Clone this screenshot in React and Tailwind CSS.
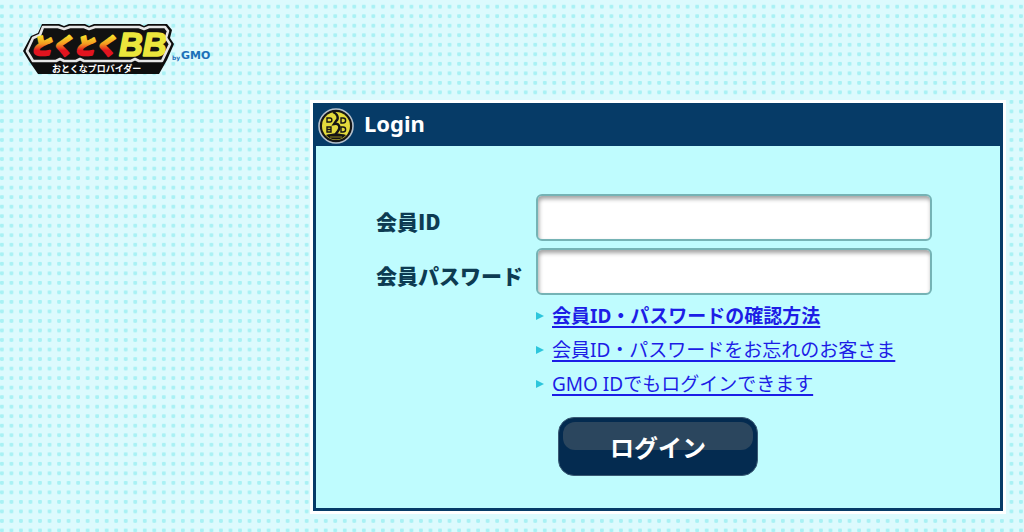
import React, { useState } from "react";

const links = [
  { text: "会員ID・パスワードの確認方法", strong: true },
  { text: "会員ID・パスワードをお忘れのお客さま", strong: false },
  { text: "GMO IDでもログインできます", strong: false },
];

const DotBackground = () => (
  <svg className="absolute inset-0 -z-10 h-full w-full" aria-hidden="true">
    <defs>
      <pattern id="dots" width="9.524" height="9.524" patternUnits="userSpaceOnUse">
        <rect x="0" y="4.7" width="3.8" height="3.8" rx="1" fill="#a9f1f4" />
      </pattern>
    </defs>
    <rect width="100%" height="100%" fill="url(#dots)" />
  </svg>
);

const Logo = () => (
  <svg width="192" height="54" viewBox="0 0 192 54" role="img" aria-label="とくとくBB by GMO">
    <defs>
      <linearGradient id="fire" gradientUnits="userSpaceOnUse" x1="0" y1="8" x2="0" y2="34">
        <stop offset="0.15" stopColor="#f8e62a" />
        <stop offset="0.5" stopColor="#f39a20" />
        <stop offset="0.75" stopColor="#e2141f" />
      </linearGradient>
    </defs>
    {/* Black plate */}
    <path
      d="M20 1H37L42 3L47 1H63L67 3L72 1H118L122 3L126 1H145L150 7L148 15L152 21L145 37L137 51H16L7 38L1 28L9 13L16 10Z"
      fill="#0d0d0d"
    />
    {/* Silver rim */}
    <path
      d="M21 4H36L42 6L48 4H62L67 6L73 4H117L122 6L127 4H143L146 8L144 15L148 21L140 38H117L113 36L109 38H62L58 36L54 38H42L38 36L34 38H11L5 28L11 15L18 12Z"
      fill="#111"
      stroke="#e6e6e6"
      strokeWidth="2.6"
      strokeLinejoin="round"
    />
    <g fontStyle="italic" strokeLinejoin="round">
      <text
        x="8"
        y="31"
        fontFamily="'Noto Sans CJK JP', sans-serif"
        fontSize="22"
        fontWeight="900"
        fill="url(#fire)"
        stroke="url(#fire)"
        strokeWidth="2.2"
      >
        とくとく
      </text>
      <text
        x="97"
        y="33"
        fontFamily="'Liberation Sans', Arial, sans-serif"
        fontSize="33"
        fontWeight="700"
        fill="#ebe63c"
        stroke="#ebe63c"
        strokeWidth="1.6"
      >
        BB
      </text>
    </g>
    <text
      x="30"
      y="49"
      fontFamily="'Noto Sans CJK JP', sans-serif"
      fontSize="9"
      fontWeight="700"
      fill="#fff"
    >
      おとくなプロバイダー
    </text>
    <g fontFamily="'DejaVu Sans', sans-serif" fontWeight="700" fill="#1c70b8">
      <text x="150" y="37" fontSize="6">by</text>
      <text x="159" y="36" fontSize="11">GMO</text>
    </g>
  </svg>
);

const Badge = () => (
  <svg width="36" height="36" viewBox="0 0 36 36" aria-hidden="true">
    <circle cx="18" cy="18" r="17" fill="#151515" stroke="#b4c0cc" strokeWidth="1.6" />
    <circle cx="18" cy="18" r="14" fill="#e3da3c" />
    <path
      d="M15 4C20 6 21 11 18 13L16 16C21 15 23 19 20 23L17 27"
      fill="none"
      stroke="#151515"
      strokeWidth="2.4"
    />
    <path d="M8 27C14 25 22 25 28 27C23 33 13 33 8 27Z" fill="#151515" />
    <path d="M12 29H24" stroke="#8d8620" strokeWidth="1" />
    <g fill="none" stroke="#151515" strokeWidth="1.4">
      <path d="M9 10H12C14.500 10 14.500 14 12 14H9Z" />
      <path d="M23 10H25C28.500 10 28.500 15 25 15H23Z" />
      <path d="M9 19H13V24H9ZM9 21.500H13" />
      <path d="M23 19H25C28.500 19 28.500 24 25 24H23Z" />
    </g>
  </svg>
);

const Field = ({ id, label, type, value, onChange }) => (
  <div className="flex items-center">
    <label htmlFor={id} className="w-40 shrink-0 pt-1.5 text-[21px] leading-7 font-black text-[#0d3b52]">
      {label}
    </label>
    <input
      id={id}
      type={type}
      value={value}
      onChange={(e) => onChange(e.target.value)}
      className="h-[47px] min-w-0 flex-1 rounded-md border-2 border-[#75b3b5] bg-white px-3 text-xl shadow-[inset_1px_3px_4px_#a3a3a3] outline-none"
    />
  </div>
);

const App = () => {
  const [memberId, setMemberId] = useState("");
  const [password, setPassword] = useState("");

  return (
    <div className="relative isolate min-h-screen bg-[#dcfafd] pb-[18px] font-['Noto_Sans','Noto_Sans_CJK_JP',sans-serif]">
      <DotBackground />

      <header className="flex h-[100px] items-start pt-[23px] pl-[22px]">
        <Logo />
      </header>

      <main className="pr-[18px] pl-[310px]">
        <section className="border-3 border-white bg-[#bffcfe]">
          <div className="border-3 border-[#063b67]">
            <div className="flex h-10 items-center bg-[#063b67] pl-0.5">
              <Badge />
              <h1 className="pb-1.5 pl-2.5 text-[22px] leading-7 font-bold text-white">Login</h1>
            </div>

            <form
              onSubmit={(e) => e.preventDefault()}
              className="pt-12 pr-[68px] pb-8 pl-[60px] font-['Noto_Sans_CJK_JP',sans-serif]"
            >
              <div className="space-y-[7px]">
                <Field id="member-id" label="会員ID" type="text" value={memberId} onChange={setMemberId} />
                <Field
                  id="member-pass"
                  label="会員パスワード"
                  type="password"
                  value={password}
                  onChange={setPassword}
                />
              </div>

              {/* Help links */}
              <ul className="mt-1 pl-40 font-['Noto_Sans','Noto_Sans_CJK_JP',sans-serif] text-[19px] leading-[34px] text-[#1d1de6]">
                {links.map((link) => (
                  <li key={link.text} className="flex items-center gap-2">
                    <svg width="8" height="8" viewBox="0 0 8 8" className="shrink-0" aria-hidden="true">
                      <path d="M0 0L8 4L0 8Z" fill="#2cc6dc" />
                    </svg>
                    <a
                      href="#"
                      className={
                        link.strong
                          ? "font-bold underline decoration-2 underline-offset-3"
                          : "underline decoration-2 underline-offset-3"
                      }
                    >
                      {link.text}
                    </a>
                  </li>
                ))}
              </ul>

              <div className="mt-4 pl-[182px]">
                <button
                  type="submit"
                  className="relative isolate h-[59px] w-[200px] rounded-2xl border border-[#3a5a74] bg-[#042b50] text-2xl font-bold text-white"
                >
                  <span className="absolute inset-x-1 top-1 -z-10 h-7 rounded-xl bg-[#2b465e]" />
                  ログイン
                </button>
              </div>
            </form>
          </div>
        </section>
      </main>
    </div>
  );
};

export default App;
